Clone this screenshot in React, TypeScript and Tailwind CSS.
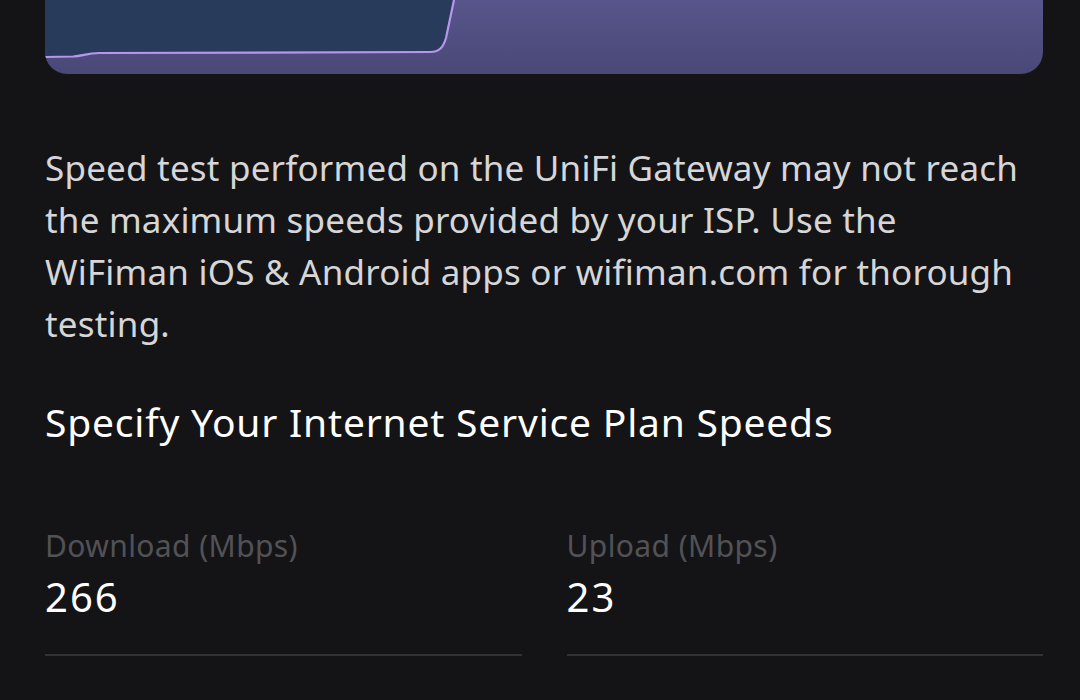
export default function App() {
  const line = 'M0,57 L28,56.5 C38,56 42,53 54,53 L385,52 C394,52 398,48 401,38 L409,0'

  return (
    <div
      className="w-[1080px] h-[700px] overflow-hidden bg-[#141416] pl-[45px] pr-[37px]"
      style={{ fontFamily: '"Noto Sans", "Open Sans", sans-serif' }}
    >
      <div className="h-[74px] w-[998px] rounded-b-[22px] overflow-hidden bg-gradient-to-b from-[#58558c] to-[#4a4877]">
        <svg width="998" height="74" viewBox="0 0 998 74">
          <path d={line + ' L0,0 Z'} fill="#293b5b" />
          <path d={line} fill="none" stroke="#b796ee" strokeWidth="2.2" />
        </svg>
      </div>

      <p className="mt-[68px] text-[35px] leading-[52px] text-[#d6d6d8] tracking-[0.2px] whitespace-nowrap">
        Speed test performed on the UniFi Gateway may not reach
        <br />
        the maximum speeds provided by your ISP. Use the
        <br />
        WiFiman iOS &amp; Android apps or wifiman.com for thorough
        <br />
        testing.
      </p>

      <h2 className="mt-[47px] text-[39px] leading-[50px] text-white tracking-[0.8px]">
        Specify Your Internet Service Plan Speeds
      </h2>

      <div className="mt-[81px] grid grid-cols-2 gap-[45px]">
        <Field label="Download (Mbps)" value="266" />
        <Field label="Upload (Mbps)" value="23" />
      </div>
    </div>
  )
}

function Field({ label, value }: { label: string; value: string }) {
  return (
    <div className="border-b-2 border-[#323235] pb-[34px]">
      <div className="text-[30px] leading-[36px] text-[#525256] tracking-[0.4px]">{label}</div>
      <div className="mt-[10px] text-[40px] leading-[46px] text-white tracking-[2px]">{value}</div>
    </div>
  )
}
